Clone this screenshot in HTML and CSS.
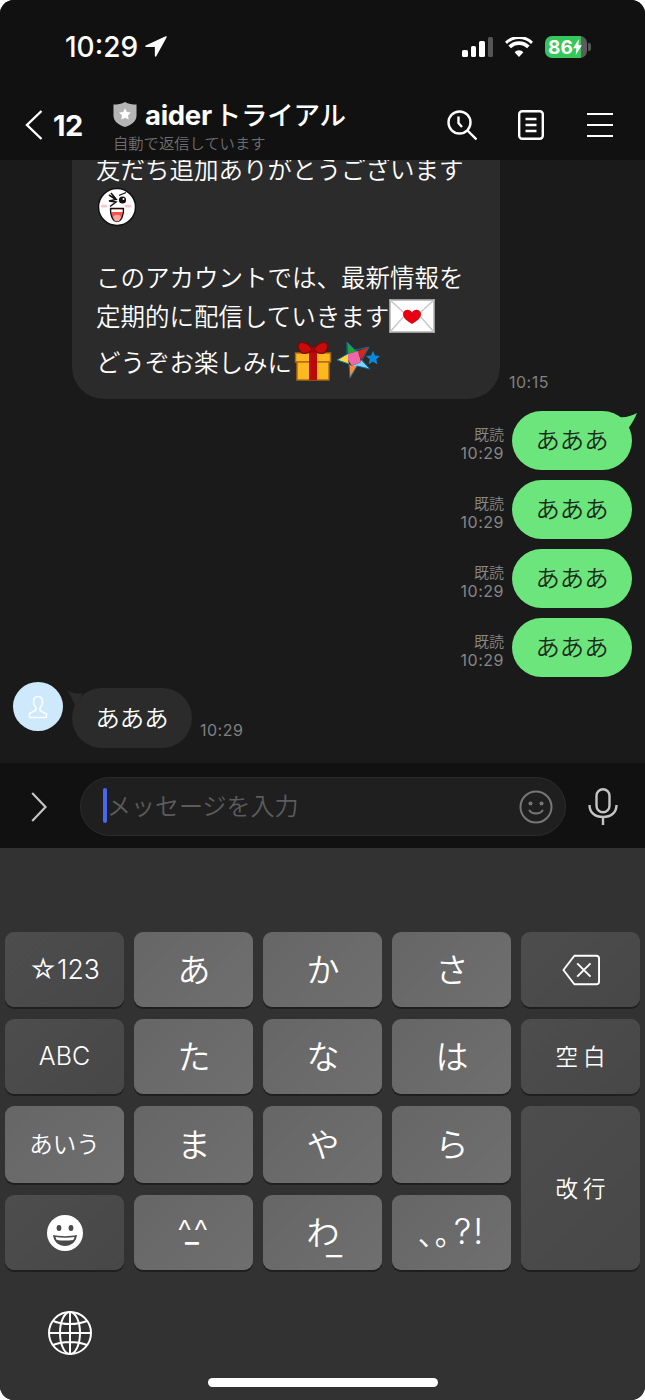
FILE: index.html
```html
<!DOCTYPE html>
<html lang="ja">
<head>
<meta charset="utf-8">
<title>aider トライアル</title>
<link rel="stylesheet" href="styles.css">
</head>
<body>
<div class="phone">
  <header class="top">
    <div class="status">
      <span class="clock">10:29</span>
      <svg class="loc" viewBox="0 0 22 22"><path d="M21 1 1 10.2h9.6V20z" fill="#fff" stroke="#fff" stroke-linejoin="round" stroke-width="1.5"/></svg>
      <div class="status-right">
        <div class="signal"><i class="b1"></i><i class="b2"></i><i class="b3"></i><i class="b4"></i></div>
        <svg class="wifi" viewBox="0 0 28 20"><path d="M14 20 9.6 15.2a6.2 6.2 0 0 1 8.8 0zM5.9 11.3 3.4 8.6a15 15 0 0 1 21.2 0l-2.5 2.7a11.4 11.4 0 0 0-16.2 0zM2 6.9 0 4.8a19.8 19.8 0 0 1 28 0l-2 2.1a17 17 0 0 0-24 0z" fill="#fff"/></svg>
        <div class="battery"><span class="batt-text">86</span><svg class="bolt" viewBox="0 0 10 18"><path d="M6.5 0 0 10.400h3.800L3 18l7-11H6z" fill="#fff"/></svg></div>
        <i class="nub"></i>
      </div>
    </div>
    <nav class="nav">
      <svg class="back" viewBox="0 0 18 30"><path d="M16.500 1 2 15l14.500 14" fill="none" stroke="#fff" stroke-width="2.400"/></svg>
      <span class="count">12</span>
      <div class="title-block">
        <div class="title-row">
          <svg class="shield" viewBox="0 0 24 26"><path d="M12 0c3.500 2 7.500 2.600 12 2.600V14c0 6-5.500 9.800-12 12C5.500 23.800 0 20 0 14V2.600C4.500 2.600 8.500 2 12 0z" fill="#b5b5b5"/><path d="m12 6.500 1.900 3.900 4.200.6-3 3 .7 4.300-3.800-2-3.800 2 .7-4.300-3-3 4.200-.6z" fill="#fff"/></svg>
          <span class="title">aider<span class="title-jp">トライアル</span></span>
        </div>
        <div class="subtitle">自動で返信しています</div>
      </div>
      <div class="nav-icons">
        <svg class="i-search" viewBox="0 0 30 30"><circle cx="12.500" cy="12.500" r="11" fill="none" stroke="#fff" stroke-width="2.400"/><path d="m20.500 20.500 9 9M11.500 6.500v6.500l3.500 4" fill="none" stroke="#fff" stroke-width="2.400"/></svg>
        <svg class="i-note" viewBox="0 0 26 30"><rect x="1.200" y="1.200" width="23.600" height="27.600" rx="3" fill="none" stroke="#fff" stroke-width="2.400"/><path d="M7.500 9h11M7.500 15h11M7.500 21h11" stroke="#fff" stroke-width="2.400"/></svg>
        <div class="i-menu"><i></i><i></i><i></i></div>
      </div>
    </nav>
  </header>

  <main class="chat">
    <div class="row-in">
      <div class="bubble-big">
        <div class="ln ln-a">友だち追加ありがとうございます</div>
        <div class="ln ln-a">
          <svg class="e-moon" viewBox="0 0 40 40">
            <circle cx="20" cy="20" r="18.500" fill="#fff" stroke="#111" stroke-width="1.500"/>
            <ellipse cx="7" cy="19" rx="3.500" ry="1.600" fill="#f8c6cc"/><ellipse cx="31" cy="19" rx="3.500" ry="1.600" fill="#f8c6cc"/>
            <path d="M12 8l7 4.500-7 1.500 7 1-6 4.500M19 12l-5-6" fill="none" stroke="#111" stroke-width="1.500"/>
            <circle cx="25.500" cy="13" r="3.600" fill="#111"/><circle cx="26.500" cy="12" r="1" fill="#fff"/><path d="M22 8.500l7-3" stroke="#111" stroke-width="1.300"/>
            <path d="M13.500 21.500h13c.5 6-2 13-6.500 13s-7-7-6.500-13z" fill="#f0554f" stroke="#111" stroke-width="1.300"/><path d="M16 30c1-3 7-3 8 0-1 3-2 4.500-4 4.500s-3-1.500-4-4.500z" fill="#f6a6a0"/><path d="M14.500 22.500h11v2.500h-11z" fill="#fff"/>
          </svg>
        </div>
        <div class="ln ln-gap"></div>
        <div class="ln ln-a">このアカウントでは、最新情報を</div>
        <div class="ln ln-b">定期的に配信していきます<svg class="e-mail" viewBox="0 0 46 34"><rect x=".8" y=".8" width="44.400" height="32.400" fill="#fff" stroke="#999" stroke-width="1.600"/><path d="M1 1l22 20L45 1M1 33l15-17M45 33 30 16" fill="none" stroke="#c8c8c8" stroke-width="1.400"/><path d="M23 25c-5-3-9-6-9-10 0-5 7-6 9-1.500 2-4.500 9-3.500 9 1.500 0 4-4 7-9 10z" fill="#e60012"/></svg></div>
        <div class="ln ln-c">どうぞお楽しみに<svg class="e-gift" viewBox="0 0 38 40"><rect x="1.500" y="12" width="35" height="9" fill="#fcb81e" stroke="#b06a10" stroke-width="1.400"/><rect x="3" y="21" width="32" height="18" fill="#fcb81e" stroke="#b06a10" stroke-width="1.400"/><rect x="15" y="11" width="8" height="28" fill="#bb0a0a"/><path d="M19 9C14 1 7 0 5 3c-2 3 1 8 3 9 3 1 8-1 11-3zM19 9c5-8 12-9 14-6 2 3-1 8-3 9-3 1-8-1-11-3z" fill="#c80c0c" stroke="#7e0606" stroke-width="1.200"/><circle cx="19" cy="9" r="2.800" fill="#a00808"/></svg><svg class="e-star" viewBox="0 0 46 40"><path d="M10 1 18 9 21 10 11 13z" fill="#1fa33c"/><path d="M32 6 21 10 24 19z" fill="#d92616"/><path d="M33 28 24 19 24 21 15 25 20 25z" fill="#7fd4fb"/><path d="M13 37 12 23 15 25 20 25z" fill="#f58b3c"/><path d="M0 19 11 13 11 19 12 23z" fill="#fcd93a"/><path d="M11 13 21 10 24 21 15 25 11 19z" fill="#ee67a8"/><path d="M10 1 18 9 32 6 25 19 33 28 20 25 13 37 12 23 0 19 10 13z" fill="none" stroke="#0b6ea8" stroke-width="1"/><path d="m36 10 2 4.500 5 .5-3.700 3.300 1 5-4.300-2.500-4.300 2.500 1-5L29 15l5-.5z" fill="#0a88dd"/></svg></div>
      </div>
      <span class="time-in time-first">10:15</span>
    </div>

    <div class="row-out row-first">
      <div class="meta"><span>既読</span><span class="meta-time">10:29</span></div>
      <div class="bubble-out">あああ<svg class="tail-out" viewBox="0 0 18 16"><path d="M0 4c6 1 12-1 18-4-2 5-5 10-9 16-2-5-5-9-9-12z" fill="#6ce67c"/></svg></div>
    </div>
    <div class="row-out">
      <div class="meta"><span>既読</span><span class="meta-time">10:29</span></div>
      <div class="bubble-out">あああ</div>
    </div>
    <div class="row-out">
      <div class="meta"><span>既読</span><span class="meta-time">10:29</span></div>
      <div class="bubble-out">あああ</div>
    </div>
    <div class="row-out">
      <div class="meta"><span>既読</span><span class="meta-time">10:29</span></div>
      <div class="bubble-out">あああ</div>
    </div>

    <div class="row-in row-last">
      <div class="avatar"><svg class="avatar-icon" viewBox="0 0 20 24"><path d="M10 1.500c3 0 4.500 2.500 4.500 5.500 0 2.500-1 4.500-2.500 6v2.500l6.500 3.500v3.500H1.500V18.500L8 15v-2.500C6.500 11 5.500 9.500 5.500 7c0-3 1.500-5.500 4.500-5.500z" fill="none" stroke="#fff" stroke-width="1.500"/></svg></div>
      <div class="bubble-in">あああ<svg class="tail-in" viewBox="0 0 16 16"><path d="M0 0c4 3 10 4 16 3L8 16C6 10 3 5 0 0z" fill="#2b2b2b"/></svg></div>
      <span class="time-in">10:29</span>
    </div>
  </main>

  <section class="composer">
    <svg class="more" viewBox="0 0 16 30"><path d="M1.200 1 14.500 15 1.200 29" fill="none" stroke="#c4c4c4" stroke-width="2.200"/></svg>
    <div class="field">
      <i class="caret"></i><span class="placeholder">メッセージを入力</span>
      <svg class="smile" viewBox="0 0 34 34"><circle cx="17" cy="17" r="15.500" fill="none" stroke="#777" stroke-width="2"/><circle cx="11.500" cy="13.500" r="2" fill="#777"/><circle cx="22.500" cy="13.500" r="2" fill="#777"/><path d="M10.500 20.500c2.500 4 10.500 4 13 0" fill="none" stroke="#777" stroke-width="2" stroke-linecap="round"/></svg>
    </div>
    <svg class="mic" viewBox="0 0 30 37"><rect x="8.500" y="1.200" width="13" height="23" rx="6.500" fill="none" stroke="#c4c4c4" stroke-width="2.400"/><path d="M1.500 17c0 8 6 12 13.500 12s13.500-4 13.500-12M15 29v8" fill="none" stroke="#c4c4c4" stroke-width="2.400"/></svg>
  </section>

  <section class="keyboard">
    <div class="keys">
      <div class="key dark k-sym">☆123</div>
      <div class="key kana">あ</div>
      <div class="key kana">か</div>
      <div class="key kana">さ</div>
      <div class="key dark"><svg class="i-del" viewBox="0 0 40 33"><path d="M13 1.500h23a3 3 0 0 1 3 3v24a3 3 0 0 1-3 3H13L1.500 16.500z" fill="none" stroke="#fff" stroke-width="2" stroke-linejoin="round"/><path d="m16 9.500 14 14M30 9.500l-14 14" stroke="#fff" stroke-width="2"/></svg></div>
      <div class="key dark k-abc">ABC</div>
      <div class="key kana">た</div>
      <div class="key kana">な</div>
      <div class="key kana">は</div>
      <div class="key dark k-cmd">空白</div>
      <div class="key k-aiu">あいう</div>
      <div class="key kana">ま</div>
      <div class="key kana">や</div>
      <div class="key kana">ら</div>
      <div class="key dark k-cmd k-enter">改行</div>
      <div class="key dark"><svg class="i-emoji" viewBox="0 0 36 36"><circle cx="18" cy="18" r="18" fill="#fff"/><ellipse cx="12" cy="13" rx="2.400" ry="3" fill="#4a4a4a"/><ellipse cx="24" cy="13" rx="2.400" ry="3" fill="#4a4a4a"/><path d="M6 20c7 1.500 17 1.500 24 0-.8 7-6 11-12 11S6.800 27 6 20z" fill="#4a4a4a"/><path d="M8.500 22c6 1 13 1 19 0-.3 1.300-.7 2.200-1.300 3-5.500.8-11 .8-16.400 0-.6-.8-1-1.700-1.300-3z" fill="#fff"/></svg></div>
      <div class="key k-face"><span class="carets">^^</span><span class="mouth">_</span></div>
      <div class="key kana"><span class="wa">わ</span><span class="wa-line">_</span></div>
      <div class="key k-punct"><span class="kuten"><span class="kuten-a">、</span><span class="kuten-b">。</span></span><span class="marks">?!</span></div>
    </div>
    <svg class="globe" viewBox="0 0 44 44"><g fill="none" stroke="#fff" stroke-width="2"><circle cx="22" cy="22" r="21"/><ellipse cx="22" cy="22" rx="10" ry="21"/><path d="M22 1v42M1 22h42M5 10c10 4 24 4 34 0M5 34c10-4 24-4 34 0"/></g></svg>
    <div class="home"></div>
  </section>
</div>
</body>
</html>
```

FILE: styles.css
```css
* { box-sizing: border-box; }
html, body { margin: 0; padding: 0; background: #fff; }
body { font-family: "Noto Sans CJK JP", Inter, sans-serif; color: #fff; }
i { display: block; }
svg { display: block; flex-shrink: 0; }

.phone {
  width: 645px;
  height: 1400px;
  display: flex;
  flex-direction: column;
  overflow: hidden;
  border-radius: 14px;
  background: #111;
}

/* header */
.top { height: 160px; flex-shrink: 0; background: #111; }
.status {
  height: 94px;
  display: flex;
  align-items: center;
  padding: 0 54px 0 65px;
}
.clock { font: 500 28px/1 Inter, sans-serif; }
.loc { width: 22px; height: 22px; margin-left: 7px; }
.status-right { margin-left: auto; display: flex; align-items: center; }
.signal { display: flex; align-items: flex-end; gap: 3px; height: 20px; }
.signal i { width: 5.500px; background: #fff; border-radius: 1.500px; }
.signal .b1 { height: 7px; }
.signal .b2 { height: 11px; }
.signal .b3 { height: 16px; }
.signal .b4 { height: 20px; background: #555; }
.wifi { width: 28px; height: 20px; margin-left: 12px; }
.battery {
  width: 42px;
  height: 22px;
  margin-left: 12px;
  border-radius: 7px;
  background: linear-gradient(90deg, #35c75a 86%, #5c5c5c 86%);
  display: flex;
  align-items: center;
  padding-left: 3px;
}
.batt-text { font: 700 19px/1 Inter, sans-serif; letter-spacing: .2px; }
.bolt { width: 9px; height: 16px; }
.nub { width: 3px; height: 8px; margin-left: 1px; border-radius: 0 2px 2px 0; background: #555; }

.nav {
  height: 66px;
  display: flex;
  align-items: center;
  padding: 0 32px 4px 25px;
}
.back { width: 18px; height: 30px; }
.count { margin-left: 10px; width: 35px; font: 700 29px/1 Inter, sans-serif; letter-spacing: -.6px; }
.title-block { margin-left: 25px; }
.title-row { display: flex; align-items: center; height: 30px; }
.shield { width: 24px; height: 25px; }
.title { margin-left: 8px; font: 700 27.500px/30px Inter, "Noto Sans CJK JP", sans-serif; letter-spacing: -.3px; white-space: nowrap; }
.title-jp { margin-left: 3px; font-family: "Noto Sans CJK JP", sans-serif; font-weight: 500; font-size: 26.500px; }
.subtitle { margin-top: 4px; font-size: 15.300px; font-weight: 350; line-height: 18px; color: #6e6e6e; white-space: nowrap; }
.nav-icons { margin-left: auto; display: flex; align-items: center; }
.i-search { width: 30px; height: 30px; }
.i-note { width: 26px; height: 30px; margin-left: 41px; }
.i-menu { width: 26px; height: 25px; margin-left: 43px; display: flex; flex-direction: column; justify-content: space-between; }
.i-menu i { height: 2.400px; background: #fff; }

/* chat */
.chat {
  height: 603px;
  flex-shrink: 0;
  background: #1a1a1a;
  display: flex;
  flex-direction: column;
  justify-content: flex-end;
  overflow: hidden;
  padding-bottom: 15px;
  font-weight: 350;
}
.row-in { display: flex; align-items: flex-end; padding-left: 72px; flex-shrink: 0; position: relative; }
.bubble-big {
  width: 428px;
  flex-shrink: 0;
  padding: 40px 0 11px 24px;
  background: #2b2b2b;
  border-radius: 32px;
  font-size: 24.500px;
}
.ln { display: flex; align-items: center; white-space: nowrap; padding-bottom: 2px; }
.ln-a { height: 38px; }
.ln-gap { height: 32px; }
.ln-b { height: 39px; margin-top: 1px; }
.ln-c { height: 52px; }
.e-moon { width: 40px; height: 40px; margin: 2px 0 0 1px; }
.e-mail { width: 46px; height: 34px; margin-left: 0; }
.e-gift { width: 38px; height: 40px; margin-left: 2px; }
.e-star { width: 46px; height: 40px; margin-left: 5px; }
.time-in { margin: 0 0 8px 8px; font: 400 16px/19px Inter, sans-serif; letter-spacing: .5px; color: #808080; }
.time-first { margin-left: 9px; margin-bottom: 7px; }

.row-out {
  display: flex;
  justify-content: flex-end;
  align-items: flex-end;
  padding-right: 13px;
  margin-top: 10px;
  flex-shrink: 0;
}
.row-first { margin-top: 12px; }
.meta { display: flex; flex-direction: column; align-items: flex-end; margin: 0 8px 7px 0; font-size: 15px; line-height: 20px; color: #888; }
.meta-time { font: 400 16px/19px Inter, sans-serif; letter-spacing: .5px; color: #868686; }
.bubble-out {
  width: 120px;
  height: 59px;
  position: relative;
  background: #6ce67c;
  color: #1e2b20;
  border-radius: 29.500px;
  font-size: 24.400px;
  line-height: 55px;
  text-align: center;
}
.tail-out { position: absolute; top: 2px; right: -5px; width: 18px; height: 16px; }

.row-last { margin-top: 11px; align-items: flex-end; }
.avatar {
  position: absolute;
  left: 13px;
  top: -6px;
  width: 50px;
  height: 49px;
  border-radius: 50%;
  background: #cde9fb;
  display: flex;
  align-items: center;
  justify-content: center;
}
.avatar-icon { width: 20px; height: 24px; }
.bubble-in {
  width: 120px;
  height: 60px;
  position: relative;
  background: #2b2b2b;
  border-radius: 30px;
  font-size: 24.400px;
  line-height: 57px;
  text-align: center;
}
.tail-in { position: absolute; top: 2px; left: -5px; width: 16px; height: 16px; }

/* composer */
.composer {
  height: 85px;
  flex-shrink: 0;
  background: #111;
  display: flex;
  align-items: center;
  padding: 2px 27px 0 31px;
}
.more { width: 16px; height: 30px; }
.field {
  width: 486px;
  height: 59px;
  margin-left: 33px;
  display: flex;
  align-items: center;
  padding: 0 12px 0 22px;
  background: #1f1f1f;
  border: 1px solid #2c2c2c;
  border-radius: 30px;
}
.caret { width: 4px; height: 35px; margin-bottom: 2px; background: #4a66f0; border-radius: 2px; }
.placeholder { padding-bottom: 4px; font-size: 24px; font-weight: 350; color: #5c5c5c; white-space: nowrap; }
.smile { width: 34px; height: 34px; margin-left: auto; }
.mic { width: 30px; height: 37px; margin-left: auto; }

/* keyboard */
.keyboard { flex: 1; background: #323232; padding-top: 84px; }
.keys {
  display: grid;
  grid-template-columns: repeat(5, 119px);
  grid-template-rows: 75px 75px 77px 75px;
  gap: 12px 10px;
  padding-left: 5px;
  font-weight: 350;
}
.key {
  position: relative;
  display: flex;
  align-items: center;
  justify-content: center;
  border-radius: 9px;
  background: linear-gradient(135deg, #666 0%, #6f6f6f 100%);
  box-shadow: 0 2px 0 #1f1f1f;
  white-space: nowrap;
}
.key.dark { background: linear-gradient(135deg, #4d4d4d 0%, #474747 100%); }
.kana { font-size: 33px; padding: 0 0 3px 1px; }
.k-sym { font: 300 26.500px/1 Inter, "Noto Sans CJK JP", sans-serif; }
.k-abc { font: 300 25px/1 Inter, sans-serif; }
.k-aiu { font-size: 23.500px; padding-bottom: 4px; }
.k-cmd { font-size: 22.500px; letter-spacing: 5px; padding: 0 0 3px 5px; }
.k-punct { padding-bottom: 2px; }
.kuten { display: flex; width: 34px; font: 350 30px/1 "Noto Sans CJK JP", sans-serif; }
.kuten-a, .kuten-b { display: block; width: 17px; flex-shrink: 0; }
.marks { font: 300 35px/1 Inter, sans-serif; letter-spacing: 2px; margin-left: 2px; }
.k-enter { grid-column: 5; grid-row: 3 / span 2; }
.i-del { width: 38px; height: 32px; }
.i-emoji { width: 36px; height: 36px; }
.carets { font: 300 33px/1 Inter, sans-serif; letter-spacing: 1.500px; padding-bottom: 2px; }
.mouth { position: absolute; left: 51px; top: 21px; font: 500 30px/1 Inter, sans-serif; }
.wa-line { position: absolute; left: 63px; top: 29px; font: 300 36px/1 Inter, sans-serif; }
.globe { width: 44px; height: 44px; margin: 41px 0 0 48px; }
.home { width: 230px; height: 9px; margin: 23px 0 0 208px; border-radius: 5px; background: #fff; }
```
